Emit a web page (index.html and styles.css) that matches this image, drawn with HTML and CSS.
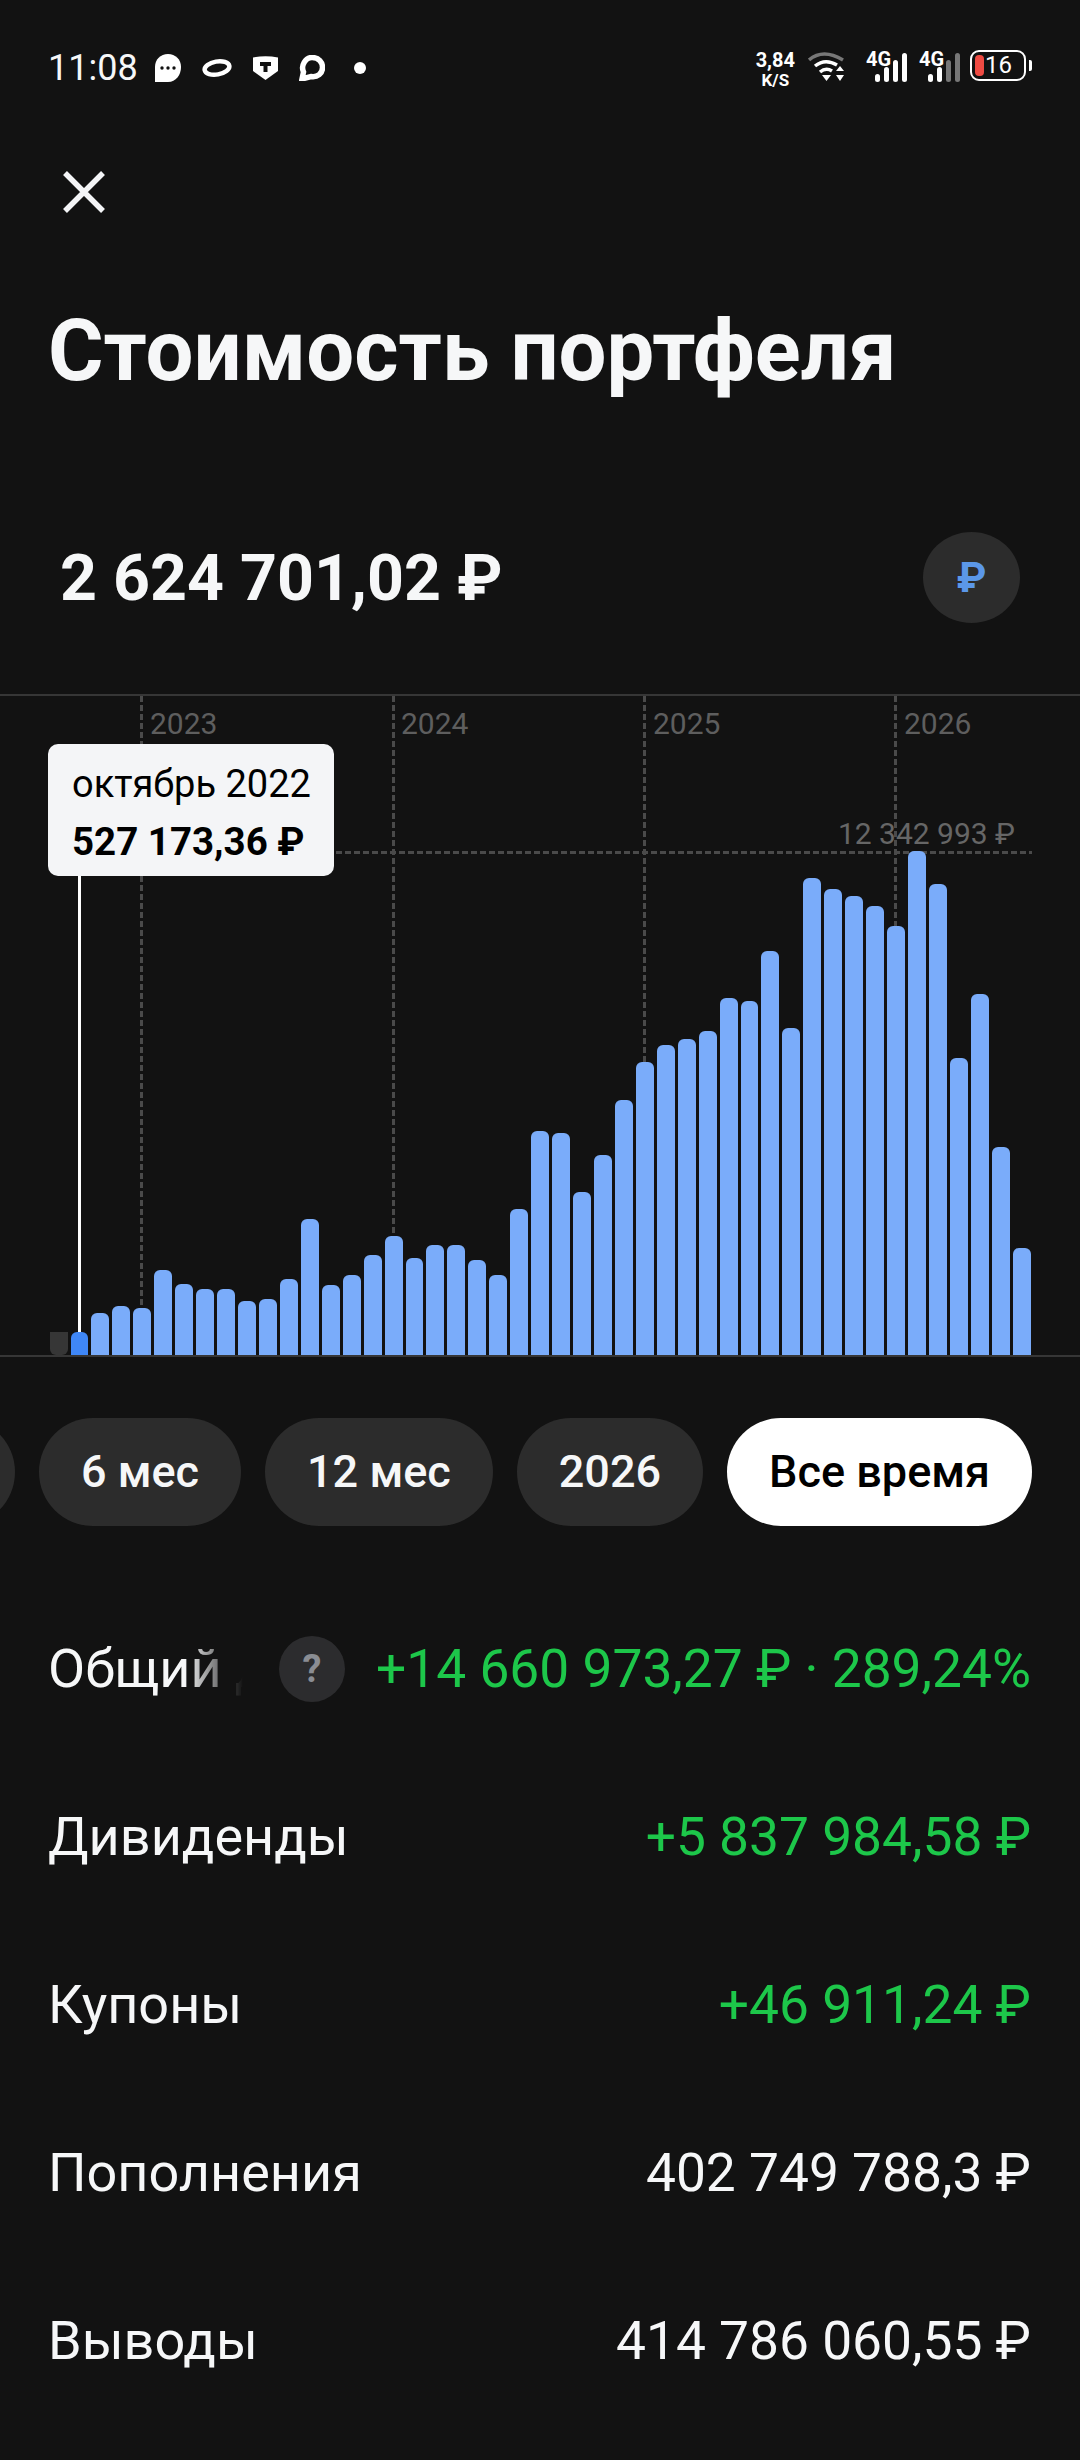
FILE: index.html
```html
<!doctype html>
<html>
<head>
    <meta charset="utf-8" />
    <title>Стоимость портфеля</title>
    <link rel="stylesheet" href="styles.css">
</head>
<body>
    <div class="status">
        <div class="status-left">
            <span class="time">11:08</span>
            <svg class="ico" width="26" height="28" viewBox="0 0 26 28"><path d="M13 0C20.500 0 26 5.500 26 13C26 21 21 28 13 28H0V13C0 5.500 5.500 0 13 0Z" fill="#fff"/><circle cx="7" cy="14" r="1.700" fill="#111"/><circle cx="13" cy="14" r="1.700" fill="#111"/><circle cx="19" cy="14" r="1.700" fill="#111"/></svg>
            <svg class="ico" width="30" height="20" viewBox="0 0 30 20"><ellipse cx="15" cy="10" rx="12.500" ry="6.500" transform="rotate(-10 15 10)" fill="none" stroke="#fff" stroke-width="4.500"/></svg>
            <svg class="ico" width="25" height="24" viewBox="0 0 25 24"><path d="M0 1.500Q12.500 -1 25 1.500V15L12.500 24L0 15Z" fill="#fff"/><path d="M7 6H18V10H14.500V16H10.500V10H7Z" fill="#111"/></svg>
            <svg class="ico" width="26" height="26" viewBox="0 0 26 26"><path d="M13 2.500C20 2.500 23.500 7.500 23.500 12.500C23.500 18.500 18.500 22.500 12 21.500L3 24L4.500 17C1.500 10.500 6.500 2.500 13 2.500Z" fill="none" stroke="#fff" stroke-width="5.500"/></svg>
            <span class="dot"></span>
        </div>
        <div class="status-right">
            <div class="speed"><b>3,84</b><b class="speed-unit">K/S</b></div>
            <svg class="wifi" width="38" height="32" viewBox="0 0 38 32">
                <path d="M1 10Q15 -2 35 10" fill="none" stroke="#777" stroke-width="3.500"/>
                <path d="M7 16Q17 8 29 15" fill="none" stroke="#fff" stroke-width="3.500"/>
                <path d="M12 22Q18 17 24 21" fill="none" stroke="#fff" stroke-width="3.500"/>
                <path d="M14 25H23L18.500 31Z" fill="#fff"/>
                <path d="M28 21L32 16L36 21ZM28 25H36L32 31Z" fill="#fff"/>
            </svg>
            <div class="net">
                <b class="net-type">4G</b>
                <svg width="33" height="30" viewBox="0 0 33 30"><rect x="0" y="22" width="5" height="8" rx="2.500" fill="#fff"/><rect x="9" y="15" width="5" height="15" rx="2.500" fill="#fff"/><rect x="18" y="8" width="5" height="22" rx="2.500" fill="#fff"/><rect x="27" y="1" width="5" height="29" rx="2.500" fill="#fff"/></svg>
            </div>
            <div class="net">
                <b class="net-type">4G</b>
                <svg width="33" height="30" viewBox="0 0 33 30"><rect x="0" y="22" width="5" height="8" rx="2.500" fill="#fff"/><rect x="9" y="15" width="5" height="15" rx="2.500" fill="#fff"/><rect x="18" y="8" width="5" height="22" rx="2.500" fill="#777"/><rect x="27" y="1" width="5" height="29" rx="2.500" fill="#777"/></svg>
            </div>
            <div class="battery">
                <span class="battery-level"></span>
                <span class="battery-text">16</span>
            </div>
            <span class="battery-nub"></span>
        </div>
    </div>

    <div class="close-row">
        <svg width="42" height="42" viewBox="0 0 42 42"><path d="M2 2L40 40M40 2L2 40" stroke="#f4f5f7" stroke-width="5.500" fill="none"/></svg>
    </div>

    <h1 class="title">Стоимость портфеля</h1>

    <div class="amount-row">
        <span class="amount">2 624 701,02 ₽</span>
        <span class="currency">₽</span>
    </div>

    <div class="chart">
        <span class="year-line" style="left:140px"></span>
        <span class="year-line" style="left:392px"></span>
        <span class="year-line" style="left:643px"></span>
        <span class="year-line" style="left:894px"></span>
        <span class="year" style="left:150px">2023</span>
        <span class="year" style="left:401px">2024</span>
        <span class="year" style="left:653px">2025</span>
        <span class="year" style="left:904px">2026</span>
        <span class="max-line"></span>
        <span class="max-label">12 342 993 ₽</span>
        <div class="bars" id="bars"></div>
        <span class="pointer"></span>
        <div class="tip">
            <div class="tip-date">октябрь 2022</div>
            <div class="tip-value">527 173,36 ₽</div>
        </div>
    </div>

    <div class="chips">
        <span class="chip"></span>
        <span class="chip">6 мес</span>
        <span class="chip">12 мес</span>
        <span class="chip">2026</span>
        <span class="chip chip-on">Все время</span>
    </div>

    <div class="rows">
        <div class="row">
            <div class="row-name">
                <span class="fade">Общий доход</span>
                <span class="help">?</span>
            </div>
            <span class="value green">+14 660 973,27 ₽ · 289,24%</span>
        </div>
        <div class="row"><span>Дивиденды</span><span class="value green">+5 837 984,58 ₽</span></div>
        <div class="row"><span>Купоны</span><span class="value green">+46 911,24 ₽</span></div>
        <div class="row"><span>Пополнения</span><span class="value">402 749 788,3 ₽</span></div>
        <div class="row"><span>Выводы</span><span class="value">414 786 060,55 ₽</span></div>
    </div>

    <script>
        // верх каждого столбика в пикселях страницы
        var tops = [1333,1333,1314,1307,1309,1271,1285,1290,1290,1302,1300,1280,1220,1286,1276,1256,1237,1259,1246,1246,1261,1276,1210,1132,1134,1193,1156,1101,1063,1046,1040,1032,999,1002,952,1029,879,890,897,907,927,852,885,1059,995,1148,1249];
        var oBars = document.getElementById('bars');
        for (var i = 0; i < tops.length; i++) {
            var oBar = document.createElement('span');
            oBar.className = 'bar';
            if (i == 0) oBar.className = 'bar bar-empty';
            if (i == 1) oBar.className = 'bar bar-on';
            oBar.style.height = (1356 - tops[i]) + 'px';
            oBars.appendChild(oBar);
        }
    </script>
</body>
</html>
```

FILE: styles.css
```css
html, body {
    margin: 0;
    padding: 0;
}
body {
    width: 1080px;
    height: 2460px;
    overflow: hidden;
    background-color: #121212;
    color: #f6f7f8;
    font-family: Roboto, "Noto Sans", sans-serif;
}

/* status bar */
.status {
    height: 134px;
    padding: 0 48px;
    box-sizing: border-box;
    display: flex;
    justify-content: space-between;
    align-items: flex-start;
}
.status-left {
    display: flex;
    align-items: center;
    height: 36px;
    margin-top: 50px;
}
.time {
    font-size: 36px;
    margin-right: 17px;
}
.ico {
    margin-right: 21px;
}
.dot {
    width: 12px;
    height: 12px;
    border-radius: 50%;
    background-color: #fff;
    margin-left: 8px;
}
.status-right {
    display: flex;
    align-items: flex-start;
    margin-top: 50px;
    color: #fff;
}
.speed {
    display: flex;
    flex-direction: column;
    align-items: center;
    font-size: 20px;
    line-height: 20px;
    margin-right: 13px;
}
.speed-unit {
    font-size: 17px;
}
.wifi {
    margin-right: 20px;
}
.net {
    position: relative;
    width: 42px;
    height: 32px;
    margin-right: 11px;
    display: flex;
    justify-content: flex-end;
    align-items: flex-end;
}
.net-type {
    position: absolute;
    left: 0;
    top: -1px;
    font-size: 20px;
    line-height: 20px;
}
.battery {
    position: relative;
    width: 56px;
    height: 31px;
    box-sizing: border-box;
    border: 2.5px solid #fff;
    border-radius: 9px;
    margin-left: -2px;
}
.battery-level {
    position: absolute;
    left: 2.5px;
    top: 2.5px;
    width: 9px;
    height: 21px;
    border-radius: 4px;
    background-color: #ef4b43;
}
.battery-text {
    position: absolute;
    left: 13px;
    top: 1px;
    font-size: 24px;
    line-height: 24px;
}
.battery-nub {
    width: 3px;
    height: 11px;
    margin: 10px 0 0 3px;
    border-radius: 0 2px 2px 0;
    background-color: #fff;
}

.close-row {
    height: 128px;
    padding: 37px 0 0 63px;
    box-sizing: border-box;
}

.title {
    margin: 54px 0 0;
    padding-left: 48px;
    height: 70px;
    font-size: 85px;
    line-height: 70px;
    font-weight: 700;
}

.amount-row {
    margin-top: 146px;
    padding: 0 60px;
    display: flex;
    justify-content: space-between;
    align-items: center;
    height: 91px;
}
.amount {
    font-size: 64.5px;
    font-weight: 700;
}
.currency {
    width: 97px;
    height: 91px;
    border-radius: 50%;
    background-color: #2c2c2c;
    color: #5b97e8;
    font-size: 42px;
    font-weight: 700;
    display: flex;
    align-items: center;
    justify-content: center;
}

/* chart */
.chart {
    position: relative;
    margin-top: 71px;
    height: 663px;
    box-sizing: border-box;
    border-top: 2px solid #363636;
    border-bottom: 2px solid #363636;
}
.year-line {
    position: absolute;
    top: 0;
    bottom: 0;
    width: 3px;
    background: repeating-linear-gradient(to bottom, #4a4a4a 0, #4a4a4a 6px, transparent 6px, transparent 9px);
}
.year {
    position: absolute;
    top: 10px;
    font-size: 30px;
    line-height: 36px;
    color: #5e5e5e;
}
.max-line {
    position: absolute;
    left: 48px;
    top: 155px;
    width: 984px;
    height: 3px;
    background: repeating-linear-gradient(to right, #4a4a4a 0, #4a4a4a 6px, transparent 6px, transparent 9px);
}
.max-label {
    position: absolute;
    right: 65px;
    top: 120px;
    font-size: 30px;
    line-height: 36px;
    color: #666;
}
.bars {
    position: absolute;
    left: 49.600px;
    bottom: 0;
    display: flex;
    align-items: flex-end;
    gap: 3px;
}
.bar {
    width: 17.940px;
    border-radius: 6px 6px 0 0;
    background-color: #7aacfa;
}
.bar-empty {
    background-color: #363636;
    border-radius: 0 0 6px 6px;
}
.bar-on {
    background-color: #3f87f7;
}
.pointer {
    position: absolute;
    left: 78px;
    top: 170px;
    width: 3px;
    height: 466px;
    background-color: #fff;
}
.tip {
    position: absolute;
    left: 48px;
    top: 48px;
    width: 286px;
    height: 132px;
    box-sizing: border-box;
    padding: 18px 0 0 24px;
    border-radius: 10px;
    background-color: #f4f5f7;
    color: #000;
}
.tip-date {
    font-size: 38px;
    line-height: 44px;
}
.tip-value {
    margin-top: 14px;
    font-size: 38.5px;
    line-height: 44px;
    font-weight: 700;
}

/* period chips */
.chips {
    margin-top: 61px;
    padding-right: 48px;
    display: flex;
    justify-content: flex-end;
    gap: 24px;
    overflow: hidden;
}
.chip {
    flex: none;
    min-width: 60px;
    height: 108px;
    padding: 0 42px;
    border-radius: 54px;
    background-color: #2c2c2c;
    font-size: 45px;
    font-weight: 500;
    line-height: 108px;
}
.chip-on {
    background-color: #fff;
    color: #000;
}

/* totals */
.rows {
    margin-top: 59px;
    padding: 0 49px 0 48px;
}
.row {
    height: 168px;
    display: flex;
    justify-content: space-between;
    align-items: center;
    font-size: 54px;
    line-height: 66px;
}
.value {
    font-size: 53.3px;
}
.row-name {
    display: flex;
    align-items: center;
}
.fade {
    display: block;
    width: 195px;
    overflow: hidden;
    white-space: nowrap;
    -webkit-mask-image: linear-gradient(to right, #000 70%, transparent 100%);
    mask-image: linear-gradient(to right, #000 70%, transparent 100%);
}
.help {
    margin-left: 36px;
    width: 66px;
    height: 66px;
    border-radius: 50%;
    background-color: #2c2c2e;
    color: #8a8d93;
    font-size: 38px;
    font-weight: 700;
    line-height: 66px;
    text-align: center;
}
.green {
    color: #1dc74a;
}
```
